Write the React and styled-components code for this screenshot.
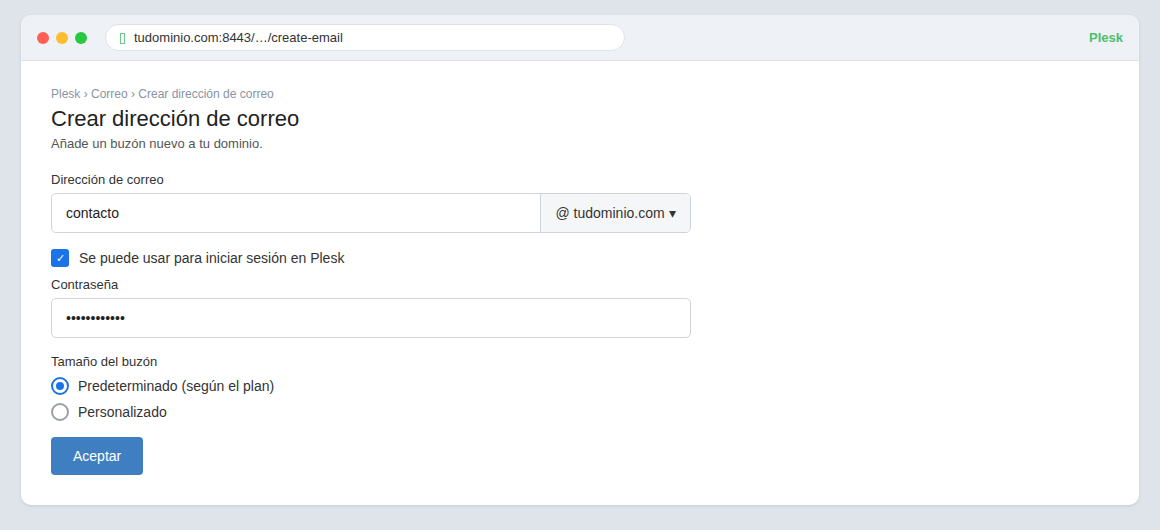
import styled, { createGlobalStyle } from "styled-components";

const Global = createGlobalStyle`
  html, body {
    margin: 0;
    padding: 0;
    background: #dfe3ea;
    font-family: "Liberation Sans", Arial, sans-serif;
  }
`;

export default function App() {
  return (
    <>
      <Global />
      <Page>
        <Window>
          <TitleBar>
            <Dots>
              <Dot color="#ff5f57" />
              <Dot color="#febc2e" />
              <Dot color="#28c840" />
            </Dots>
            <UrlBar>
              <Lock />
              tudominio.com:8443/…/create-email
            </UrlBar>
            <Brand>Plesk</Brand>
          </TitleBar>
          <Content>
            <Breadcrumb>Plesk › Correo › Crear dirección de correo</Breadcrumb>
            <Title>Crear dirección de correo</Title>
            <Subtitle>Añade un buzón nuevo a tu dominio.</Subtitle>

            <Label $top={20}>Dirección de correo</Label>
            <InputGroup>
              <Field>contacto</Field>
              <Suffix>@ tudominio.com ▾</Suffix>
            </InputGroup>

            <CheckRow>
              <Checkbox>✓</Checkbox>
              Se puede usar para iniciar sesión en Plesk
            </CheckRow>

            <Label $top={10}>Contraseña</Label>
            <Input>••••••••••••</Input>

            <Label $top={16}>Tamaño del buzón</Label>
            <Radios>
              <RadioRow>
                <Radio $checked />
                Predeterminado (según el plan)
              </RadioRow>
              <RadioRow>
                <Radio />
                Personalizado
              </RadioRow>
            </Radios>

            <Button>Aceptar</Button>
          </Content>
        </Window>
      </Page>
    </>
  );
}

const Page = styled.div`
  padding: 15px 21px 25px;
`;

const Window = styled.div`
  background: #fff;
  border-radius: 10px;
  overflow: hidden;
  box-shadow: 0 1px 3px rgba(30, 40, 60, 0.12);
`;

const TitleBar = styled.div`
  height: 45px;
  background: #eef1f5;
  border-bottom: 1px solid #dde1e8;
  display: flex;
  align-items: center;
  padding: 0 16px;
`;

const Dots = styled.div`
  display: flex;
  gap: 7px;
  margin-right: 18px;
`;

const Dot = styled.span`
  width: 12px;
  height: 12px;
  border-radius: 50%;
  background: ${(p) => p.color};
`;

const UrlBar = styled.div`
  width: 520px;
  height: 27px;
  background: #fff;
  border: 1px solid #dde1e8;
  border-radius: 14px;
  display: flex;
  align-items: center;
  padding: 0 14px;
  box-sizing: border-box;
  font-size: 13px;
  color: #333;
`;

const Lock = styled.span`
  width: 3px;
  height: 9px;
  border: 1px solid #6cc98a;
  margin-right: 9px;
  margin-top: 1px;
`;

const Brand = styled.div`
  margin-left: auto;
  color: #4cbf6c;
  font-weight: bold;
  font-size: 13px;
`;

const Content = styled.div`
  padding: 25px 30px 30px;
  display: flex;
  flex-direction: column;
  align-items: flex-start;
`;

const Breadcrumb = styled.div`
  font-size: 12px;
  color: #8a93a3;
  line-height: 16px;
`;

const Title = styled.h1`
  margin: 3px 0 0;
  font-size: 22px;
  font-weight: normal;
  color: #222;
  line-height: 28px;
`;

const Subtitle = styled.div`
  margin-top: 3px;
  font-size: 13px;
  color: #555;
  line-height: 16px;
`;

const Label = styled.div`
  margin-top: ${(p) => p.$top}px;
  font-size: 13px;
  color: #333;
  line-height: 16px;
  margin-bottom: 5px;
`;

const InputGroup = styled.div`
  width: 640px;
  height: 40px;
  display: flex;
  border: 1px solid #cfd4db;
  border-radius: 5px;
  box-sizing: border-box;
  overflow: hidden;
`;

const Field = styled.div`
  flex: 1;
  display: flex;
  align-items: center;
  padding: 0 14px;
  font-size: 14px;
  color: #222;
`;

const Suffix = styled.div`
  width: 149px;
  border-left: 1px solid #cfd4db;
  background: #f5f6f8;
  display: flex;
  align-items: center;
  justify-content: center;
  font-size: 14px;
  color: #333;
`;

const Input = styled.div`
  width: 640px;
  height: 40px;
  border: 1px solid #cfd4db;
  border-radius: 5px;
  box-sizing: border-box;
  display: flex;
  align-items: center;
  padding: 0 14px;
  font-size: 14px;
  color: #222;
`;

const CheckRow = styled.div`
  margin-top: 16px;
  display: flex;
  align-items: center;
  gap: 10px;
  font-size: 14px;
  color: #333;
  height: 18px;
`;

const Checkbox = styled.span`
  width: 18px;
  height: 18px;
  border-radius: 3px;
  background: #1a73e8;
  color: #fff;
  font-size: 11px;
  display: flex;
  align-items: center;
  justify-content: center;
`;

const Radios = styled.div`
  display: flex;
  flex-direction: column;
  gap: 8px;
  margin-top: 2px;
`;

const RadioRow = styled.div`
  display: flex;
  align-items: center;
  gap: 9px;
  font-size: 14px;
  color: #333;
  height: 18px;
`;

const Radio = styled.span`
  width: 18px;
  height: 18px;
  border-radius: 50%;
  box-sizing: border-box;
  border: 2px solid ${(p) => (p.$checked ? "#1a73e8" : "#9aa0a6")};
  display: flex;
  align-items: center;
  justify-content: center;
  &::after {
    content: "";
    width: 8px;
    height: 8px;
    border-radius: 50%;
    background: ${(p) => (p.$checked ? "#1a73e8" : "transparent")};
  }
`;

const Button = styled.button`
  margin-top: 16px;
  height: 38px;
  padding: 0 22px;
  background: #3f7fc1;
  color: #fff;
  border: none;
  border-radius: 4px;
  font-family: inherit;
  font-size: 14px;
`;
